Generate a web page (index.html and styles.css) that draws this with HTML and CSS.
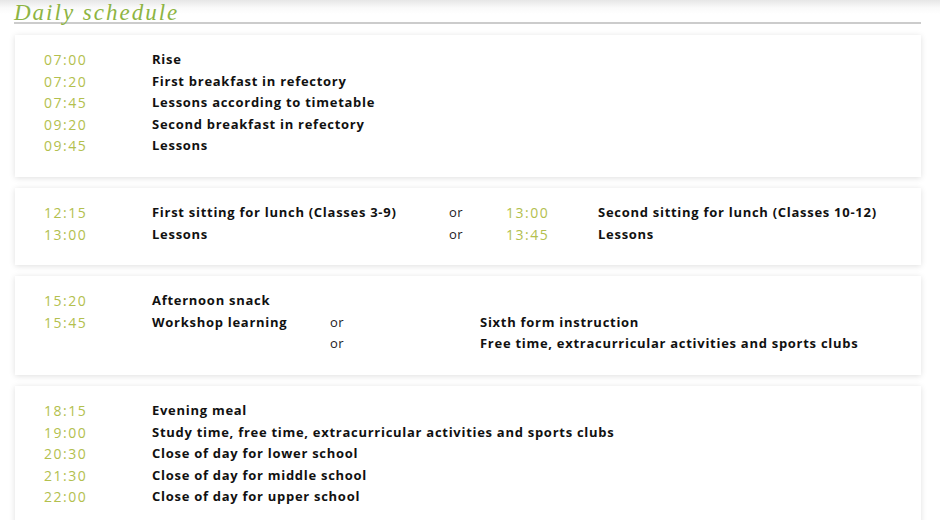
FILE: index.html
```html
<!DOCTYPE html>
<html>
<head>
<meta charset="utf-8">
<link rel="stylesheet" href="styles.css">
</head>
<body>
<div class="page">
  <h1 class="title">Daily schedule</h1>
  <div class="cards">
    <div class="card sched-a">
      <span class="time">07:00</span><span class="desc">Rise</span>
      <span class="time">07:20</span><span class="desc">First breakfast in refectory</span>
      <span class="time">07:45</span><span class="desc">Lessons according to timetable</span>
      <span class="time">09:20</span><span class="desc">Second breakfast in refectory</span>
      <span class="time">09:45</span><span class="desc">Lessons</span>
    </div>
    <div class="card sched-b">
      <span class="time">12:15</span><span class="desc">First sitting for lunch (Classes 3-9)</span><span class="or">or</span><span class="time">13:00</span><span class="desc">Second sitting for lunch (Classes 10-12)</span>
      <span class="time">13:00</span><span class="desc">Lessons</span><span class="or">or</span><span class="time">13:45</span><span class="desc">Lessons</span>
    </div>
    <div class="card sched-c">
      <span class="time">15:20</span><span class="desc">Afternoon snack</span><span></span><span></span>
      <span class="time">15:45</span><span class="desc">Workshop learning</span><span class="or">or</span><span class="desc">Sixth form instruction</span>
      <span></span><span></span><span class="or">or</span><span class="desc">Free time, extracurricular activities and sports clubs</span>
    </div>
    <div class="card sched-a">
      <span class="time">18:15</span><span class="desc">Evening meal</span>
      <span class="time">19:00</span><span class="desc">Study time, free time, extracurricular activities and sports clubs</span>
      <span class="time">20:30</span><span class="desc">Close of day for lower school</span>
      <span class="time">21:30</span><span class="desc">Close of day for middle school</span>
      <span class="time">22:00</span><span class="desc">Close of day for upper school</span>
    </div>
  </div>
</div>
</body>
</html>
```
FILE: styles.css
```css
html, body {
  margin: 0;
  padding: 0;
  background: #fff;
}
body {
  font-family: "Open Sans", "Liberation Sans", sans-serif;
  background: linear-gradient(to bottom, #e6e6e6 0px, #fafafa 8px, #ffffff 14px);
  height: 520px;
  overflow: hidden;
}
.page {
  padding: 0 19px 0 14px;
}
.title {
  margin: 0;
  font-family: "Liberation Serif", "Times New Roman", serif;
  font-style: italic;
  font-weight: normal;
  font-size: 23px;
  line-height: 25px;
  height: 22px;
  color: #8db443;
  border-bottom: 2px solid #cccccc;
  letter-spacing: 2px;
}
.cards {
  display: flex;
  flex-direction: column;
  gap: 11px;
  margin-top: 11px;
  padding-left: 1px;
}
.card {
  background: #fff;
  box-shadow: 0 1px 6px rgba(0, 0, 0, 0.13);
  padding: 14px 0 20px 29px;
  display: grid;
  align-items: center;
}
.sched-a {
  grid-template-columns: 108px 1fr;
}
.sched-b {
  grid-template-columns: 108px 297px 57px 92px 1fr;
}
.sched-c {
  grid-template-columns: 108px 178px 150px 1fr;
}
.card > span {
  line-height: 21.6px;
  height: 21.6px;
  white-space: nowrap;
}
.time {
  font-size: 14px;
  color: #b3c04e;
  font-weight: 400;
  letter-spacing: 1.5px;
}
.desc {
  font-size: 13px;
  font-weight: 700;
  color: #111;
  letter-spacing: 0.72px;
}
.or {
  font-size: 13px;
  color: #222;
  letter-spacing: 0.5px;
}
```
